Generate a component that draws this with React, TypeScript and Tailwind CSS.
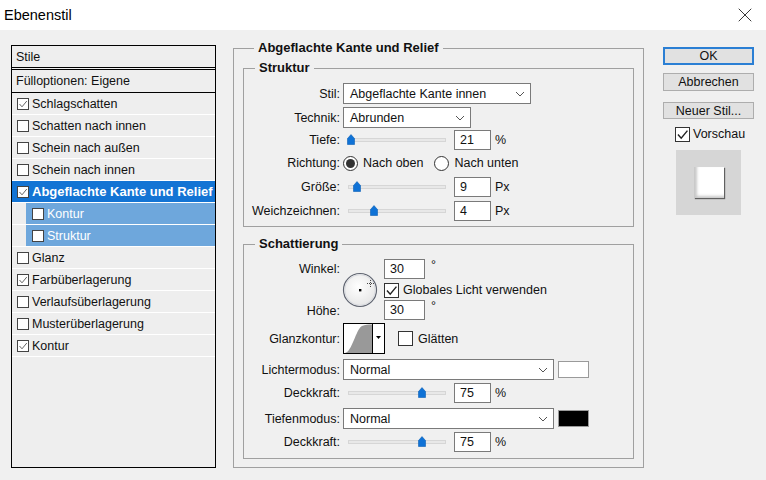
import { X } from 'lucide-react'

const effects = [
  { name: 'Schlagschatten', checked: true },
  { name: 'Schatten nach innen', checked: false },
  { name: 'Schein nach außen', checked: false },
  { name: 'Schein nach innen', checked: false },
  { name: 'Abgeflachte Kante und Relief', checked: true, active: true },
  { name: 'Kontur', checked: false, sub: true },
  { name: 'Struktur', checked: false, sub: true },
  { name: 'Glanz', checked: false },
  { name: 'Farbüberlagerung', checked: true },
  { name: 'Verlaufsüberlagerung', checked: false },
  { name: 'Musterüberlagerung', checked: false },
  { name: 'Kontur', checked: true },
]

function CheckBox({ checked, big }: { checked?: boolean; big?: boolean }) {
  const s = big ? 15 : 12
  return (
    <span
      className={
        (big ? 'w-[15px] h-[15px] border-[#333]' : 'w-[12px] h-[12px] border-[#444]') +
        ' shrink-0 border bg-white flex items-center justify-center'
      }
    >
      {checked && (
        <svg width={s - 2} height={s - 2} viewBox="0 0 10 10">
          <polyline
            points="1.5,5 4,7.8 8.8,2"
            fill="none"
            stroke={big ? '#222' : '#555'}
            strokeWidth={big ? 1.1 : 0.9}
          />
        </svg>
      )}
    </span>
  )
}

function Chevron() {
  return (
    <svg width="10" height="6" viewBox="0 0 10 6" className="shrink-0">
      <polyline points="1,1 5,5 9,1" fill="none" stroke="#555" strokeWidth="1" />
    </svg>
  )
}

function Select({ value, width }: { value: string; width: string }) {
  return (
    <div className={width + ' h-[21px] ml-[3px] border border-[#7a7a7a] bg-white flex items-center justify-between pl-[6px] pr-[5px]'}>
      <span>{value}</span>
      <Chevron />
    </div>
  )
}

function Field({ value }: { value: string }) {
  return (
    <div className="w-[37px] h-[20px] border border-[#7a7a7a] bg-white flex items-center pl-[5px]">{value}</div>
  )
}

function Slider({ pos }: { pos: number }) {
  return (
    <div className="w-[111px] ml-[3px] h-full flex items-center">
      <div className="relative ml-[5px] w-[98px] h-[4px] border border-[#d6d6d6] bg-[#e8e8e8]">
        <svg
          width="8"
          height="11"
          viewBox="0 0 8 11"
          className="absolute top-[-5px]"
          style={{ left: pos - 4 }}
        >
          <path d="M0.5 4.5 L4 0.6 L7.5 4.5 V10.5 H0.5 Z" fill="#0f72d6" stroke="#0b5fb5" strokeWidth="0.6" strokeLinejoin="round" />
        </svg>
      </div>
    </div>
  )
}

function SliderRow({ label, value, unit, pos, mt }: { label: string; value: string; unit: string; pos: number; mt: string }) {
  return (
    <div className={mt + ' flex items-center h-[20px]'}>
      <span className="w-[96px] text-right">{label}</span>
      <Slider pos={pos} />
      <Field value={value} />
      <span className="ml-[4px]">{unit}</span>
    </div>
  )
}

function Radio({ selected }: { selected?: boolean }) {
  return (
    <span className="w-[15px] h-[15px] rounded-full border border-[#333] bg-white flex items-center justify-center shrink-0">
      {selected && <span className="w-[9px] h-[9px] rounded-full bg-[#333]" />}
    </span>
  )
}

function AngleDial() {
  return (
    <svg width="36" height="36" viewBox="0 0 36 36" className="ml-[2px] self-center shrink-0">
      <defs>
        <radialGradient id="dial" cx="45%" cy="40%" r="60%">
          <stop offset="0%" stopColor="#ffffff" />
          <stop offset="100%" stopColor="#e6e6e6" />
        </radialGradient>
      </defs>
      <circle cx="18" cy="18" r="16.5" fill="url(#dial)" stroke="#5f6470" strokeWidth="1.2" />
      <circle cx="18" cy="18" r="15.3" fill="none" stroke="#d9dbe0" strokeWidth="1" />
      <rect x="17" y="17" width="2.4" height="2.4" fill="#000" />
      <g stroke="#333" strokeWidth="0.9" strokeDasharray="1 1">
        <line x1="28.5" y1="8" x2="28.5" y2="15" />
        <line x1="25" y1="11.5" x2="32" y2="11.5" />
      </g>
    </svg>
  )
}

function ContourPicker() {
  return (
    <svg width="42" height="31" viewBox="0 0 42 31" className="ml-[3px] shrink-0">
      <rect x="0.5" y="0.5" width="41" height="30" fill="#fff" stroke="#000" />
      <path d="M2 30 C 9 29, 13 6, 19 3 C 22 1.5, 25 1.5, 29 1.5 L 29 30 Z" fill="#999" />
      <line x1="29.5" y1="1" x2="29.5" y2="30" stroke="#000" />
      <path d="M33 13 L38 13 L35.5 16 Z" fill="#000" />
    </svg>
  )
}

export default function App() {
  return (
    <div className="w-[766px] h-[480px] overflow-hidden bg-[#f0f0f0] text-[12.5px] leading-[16px] text-[#111] font-['Liberation_Sans',Arial,sans-serif] flex flex-col">
      <div className="h-[30px] bg-white flex items-center justify-between pl-[4px] pr-[9px] shrink-0">
        <span className="text-[14.5px] text-black">Ebenenstil</span>
        <X className="w-[24px] h-[24px] text-[#222]" strokeWidth={0.9} />
      </div>

      <div className="flex items-start pt-[11px] pl-[11px]">
        {/* Stile list */}
        <div className="mt-[4px] w-[205px] h-[423px] border border-black bg-[#eeeeee] flex flex-col">
          <div className="h-[24px] border-b-[3px] border-double border-black flex items-center pl-[4px]">Stile</div>
          <div className="h-[23px] border-b border-black flex items-center pl-[4px]">Fülloptionen: Eigene</div>
          {effects.map((e, i) => (
            <div key={i} className="h-[22px] border-b border-white flex">
              {e.sub ? (
                <div className="ml-[14px] flex-1 bg-[#6ea7dc] text-white flex items-center pl-[6px] gap-[3px]">
                  <CheckBox checked={e.checked} />
                  <span>{e.name}</span>
                </div>
              ) : (
                <div
                  className={
                    (e.active ? 'bg-[#1374d4] text-white font-bold text-[13px]' : '') +
                    ' flex-1 flex items-center pl-[5px] gap-[3px]'
                  }
                >
                  <CheckBox checked={e.checked} />
                  <span>{e.name}</span>
                </div>
              )}
            </div>
          ))}
        </div>

        {/* main group */}
        <fieldset className="ml-[17px] w-[411px] h-[427px] border border-[#a0a0a0] px-[9px]">
          <legend className="ml-[11px] px-[4px] font-bold text-[13px] leading-[14px]">Abgeflachte Kante und Relief</legend>

          <fieldset className="mt-[6px] border border-[#a0a0a0] pt-[8px] pb-[5px]">
            <legend className="ml-[11px] px-[4px] font-bold text-[13px] leading-[14px]">Struktur</legend>
            <div className="flex items-center h-[21px]">
              <span className="w-[96px] text-right">Stil:</span>
              <Select value="Abgeflachte Kante innen" width="w-[188px]" />
            </div>
            <div className="mt-[3px] flex items-center h-[21px]">
              <span className="w-[96px] text-right">Technik:</span>
              <Select value="Abrunden" width="w-[128px]" />
            </div>
            <SliderRow mt="mt-[2px]" label="Tiefe:" value="21" unit="%" pos={2} />
            <div className="mt-[3px] flex items-center h-[20px]">
              <span className="w-[96px] text-right">Richtung:</span>
              <span className="ml-[3px]"><Radio selected /></span>
              <span className="ml-[5px]">Nach oben</span>
              <span className="ml-[11px]"><Radio /></span>
              <span className="ml-[5px]">Nach unten</span>
            </div>
            <SliderRow mt="mt-[4px]" label="Größe:" value="9" unit="Px" pos={8} />
            <SliderRow mt="mt-[4px]" label="Weichzeichnen:" value="4" unit="Px" pos={25} />
          </fieldset>

          <fieldset className="mt-[10px] border border-[#a0a0a0] pt-[8px] pb-[6px]">
            <legend className="ml-[11px] px-[4px] font-bold text-[13px] leading-[14px]">Schattierung</legend>
            <div className="flex h-[62px]">
              <div className="w-[96px] flex flex-col justify-between text-right">
                <span className="leading-[20px]">Winkel:</span>
                <span className="leading-[20px]">Höhe:</span>
              </div>
              <AngleDial />
              <div className="ml-[6px] flex flex-col">
                <div className="flex items-start">
                  <div className="w-[41px] h-[20px] border border-[#7a7a7a] bg-white flex items-center pl-[5px]">30</div>
                  <span className="ml-[6px] leading-[12px]">°</span>
                </div>
                <div className="mt-[3px] flex items-center">
                  <CheckBox checked big />
                  <span className="ml-[4px]">Globales Licht verwenden</span>
                </div>
                <div className="mt-[2px] flex items-start">
                  <div className="w-[41px] h-[20px] border border-[#7a7a7a] bg-white flex items-center pl-[5px]">30</div>
                  <span className="ml-[6px] leading-[12px]">°</span>
                </div>
              </div>
            </div>
            <div className="mt-[2px] flex items-center h-[31px]">
              <span className="w-[96px] text-right">Glanzkontur:</span>
              <ContourPicker />
              <span className="ml-[13px]"><CheckBox big /></span>
              <span className="ml-[5px]">Glätten</span>
            </div>
            <div className="mt-[5px] flex items-center h-[21px]">
              <span className="w-[96px] text-right">Lichtermodus:</span>
              <Select value="Normal" width="w-[211px]" />
              <span className="ml-[4px] w-[31px] h-[17px] border border-[#9a9a9a] bg-white" />
            </div>
            <SliderRow mt="mt-[3px]" label="Deckkraft:" value="75" unit="%" pos={73} />
            <div className="mt-[5px] flex items-center h-[21px]">
              <span className="w-[96px] text-right">Tiefenmodus:</span>
              <Select value="Normal" width="w-[211px]" />
              <span className="ml-[4px] w-[31px] h-[17px] border border-[#9a9a9a] bg-black" />
            </div>
            <SliderRow mt="mt-[3px]" label="Deckkraft:" value="75" unit="%" pos={73} />
          </fieldset>
        </fieldset>

        {/* buttons */}
        <div className="ml-[19px] mt-[6px] w-[91px] flex flex-col">
          <button className="h-[18px] border-2 border-[#2b7fd4] bg-[#e1e1e1] flex items-center justify-center">OK</button>
          <button className="mt-[8px] h-[18px] border border-[#adadad] bg-[#e1e1e1] flex items-center justify-center">Abbrechen</button>
          <button className="mt-[11px] h-[17px] border border-[#adadad] bg-[#e1e1e1] flex items-center justify-center">Neuer Stil...</button>
          <div className="mt-[7px] ml-[12px] flex items-center">
            <CheckBox checked big />
            <span className="ml-[3px]">Vorschau</span>
          </div>
          <div className="mt-[8px] ml-[13px] w-[65px] h-[65px] bg-[#d6d6d6] flex items-center justify-center">
            <div className="w-[30px] h-[31px] bg-white shadow-[1px_1px_1px_rgba(0,0,0,0.55),inset_3px_-2px_3px_rgba(0,0,0,0.22)]" />
          </div>
        </div>
      </div>
    </div>
  )
}
